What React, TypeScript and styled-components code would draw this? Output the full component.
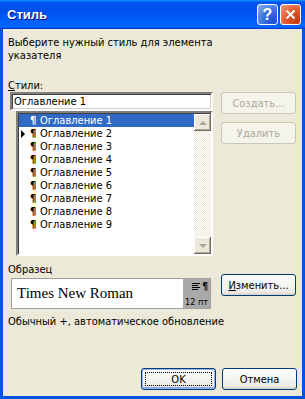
import styled, { createGlobalStyle } from 'styled-components';

const GlobalStyle = createGlobalStyle`
  html, body {
    margin: 0;
    padding: 0;
    background: #fff;
  }
  body {
    width: 305px;
    height: 399px;
    overflow: hidden;
  }
`;

const UI_FONT = `'DejaVu Sans Condensed', 'DejaVu Sans', 'Liberation Sans', sans-serif`;

const Window = styled.div`
  width: 305px;
  height: 399px;
  display: flex;
  flex-direction: column;
  background: #0054e3;
  font-family: ${UI_FONT};
  font-size: 11px;
  color: #000;
`;

const TitleBar = styled.div`
  height: 29px;
  flex: none;
  display: flex;
  align-items: center;
  padding: 0 4px 0 7px;
  background: linear-gradient(
    180deg,
    #0997ff,
    #0053ee 8%,
    #0050ee 40%,
    #06f 88%,
    #06f 93%,
    #005bff 95%,
    #003dd7 96%,
    #003dd7
  );
`;

const Title = styled.span`
  flex: 1;
  font-family: 'Liberation Sans', Arial, sans-serif;
  font-weight: bold;
  font-size: 13px;
  color: #fff;
  text-shadow: 1px 1px #0f1089;
`;

const Caption = styled.div<{ $kind: 'help' | 'close' }>`
  width: 21px;
  height: 21px;
  box-sizing: border-box;
  margin-left: 2px;
  border: 1px solid #fff;
  border-radius: 3px;
  display: flex;
  align-items: center;
  justify-content: center;
  color: #fff;
  font-family: 'Liberation Sans', Arial, sans-serif;
  font-weight: bold;
  font-size: 16px;
  background: ${(p) =>
    p.$kind === 'close'
      ? 'radial-gradient(circle at 85% 85%, #c43a12 0%, #e05a2e 50%, #eea184 100%)'
      : 'radial-gradient(circle at 85% 85%, #1a4fd6 0%, #3a72e6 50%, #8cb0f4 100%)'};
`;

const Frame = styled.div`
  flex: 1;
  display: flex;
  padding: 0 3px 3px;
`;

const Body = styled.div`
  flex: 1;
  display: flex;
  flex-direction: column;
  background: #ece9d8;
  padding: 7px 5px 6px 5px;
`;

const Text = styled.div<{ $gap?: number }>`
  line-height: 13px;
  margin-top: ${(p) => p.$gap ?? 0}px;
  white-space: nowrap;
`;

const Columns = styled.div<{ $gap?: number }>`
  display: grid;
  grid-template-columns: 205px 75px;
  column-gap: 8px;
  align-items: start;
  margin-top: ${(p) => p.$gap ?? 0}px;
`;

const LeftCol = styled.div`
  margin-left: 2px;
  display: flex;
  flex-direction: column;
`;

const Sunken = `
  border-style: solid;
  border-width: 2px;
  border-color: #808080 #fff #fff #808080;
  box-shadow: inset 1px 1px #404040, inset -1px -1px #d4d0c8;
`;

const TextBox = styled.div`
  height: 19px;
  box-sizing: border-box;
  background: #fff;
  ${Sunken}
  padding: 0 2px;
  line-height: 15px;
`;

const ListBox = styled.div`
  margin-left: 6px;
  height: 145px;
  box-sizing: border-box;
  display: flex;
  background: #fff;
  ${Sunken}
  box-shadow: inset 1px 1px #404040;
  padding: 1px 0 0 1px;
`;

const Rows = styled.ul`
  flex: 1;
  list-style: none;
  margin: 0;
  padding: 0;
`;

const Row = styled.li<{ $selected?: boolean }>`
  height: 13px;
  display: flex;
  align-items: center;
  background: ${(p) => (p.$selected ? '#316ac5' : 'transparent')};
  color: ${(p) => (p.$selected ? '#fff' : '#000')};
  line-height: 13px;
`;

const Marker = styled.span<{ $on?: boolean }>`
  width: 11px;
  flex: none;
  display: flex;
  justify-content: flex-start;
  padding-left: 2px;
  box-sizing: border-box;
  &::before {
    content: '';
    display: ${(p) => (p.$on ? 'block' : 'none')};
    border-left: 4px solid #000;
    border-top: 4px solid transparent;
    border-bottom: 4px solid transparent;
  }
`;

const Pilcrow = styled.span`
  width: 10px;
  flex: none;
  font-weight: bold;
`;

const ScrollBar = styled.div`
  width: 17px;
  flex: none;
  display: flex;
  flex-direction: column;
  justify-content: space-between;
  background: repeating-conic-gradient(#fff 0 25%, #ece9d8 0 50%) 0 0 / 2px 2px;
`;

const ScrollButton = styled.div<{ $dir: 'up' | 'down' }>`
  width: 17px;
  height: 17px;
  box-sizing: border-box;
  background: #ece9d8;
  box-shadow: inset -1px -1px #716f64, inset 1px 1px #fff, inset -2px -2px #aca899;
  display: flex;
  align-items: center;
  justify-content: center;
  &::before {
    content: '';
    border-left: 4px solid transparent;
    border-right: 4px solid transparent;
    ${(p) => (p.$dir === 'up' ? 'border-bottom' : 'border-top')}: 4px solid #aca899;
  }
`;

const ButtonStack = styled.div`
  display: flex;
  flex-direction: column;
  gap: 8px;
`;

const Button = styled.button<{ $default?: boolean }>`
  width: 75px;
  height: 22px;
  box-sizing: border-box;
  padding: 0;
  font-family: ${UI_FONT};
  font-size: 11px;
  color: #000;
  border: 1px solid #003c74;
  border-radius: 3px;
  background: linear-gradient(180deg, #fff, #ecebe6 86%, #d6d0c5);
  box-shadow: ${(p) =>
    p.$default ? 'inset 0 0 0 1px #99b5f2, inset 0 -1px 0 1px #8aa4e8' : 'none'};
  position: relative;
  &:disabled {
    color: #aca899;
    border-color: #c9c7ba;
    background: #f5f4ea;
  }
  & u {
    text-decoration: underline;
  }
`;

const FocusRing = styled.span`
  position: absolute;
  inset: 3px;
  border: 1px dotted #000;
`;

const PreviewRow = styled.div`
  display: grid;
  grid-template-columns: 205px 75px;
  column-gap: 8px;
  align-items: start;
  margin-top: -2px;
`;

const Preview = styled.div`
  margin: 4px 2px 0 3px;
  height: 31px;
  box-sizing: border-box;
  display: flex;
  background: #fff;
  border: 1px solid #a0a0a0;
`;

const Sample = styled.div`
  flex: 1;
  padding-left: 5px;
  font-family: 'Liberation Serif', 'Times New Roman', serif;
  font-size: 15px;
  line-height: 29px;
`;

const Info = styled.div`
  width: 25px;
  flex: none;
  background: #a9a9a9;
  display: flex;
  flex-direction: column;
  align-items: flex-end;
  justify-content: space-between;
  padding: 3px 2px 1px 0;
`;

const InfoIcons = styled.div`
  display: flex;
  align-items: center;
  gap: 2px;
  font-weight: bold;
  font-size: 10px;
  line-height: 9px;
`;

const InfoSize = styled.span`
  font-size: 9px;
  line-height: 10px;
  white-space: nowrap;
`;

const Footer = styled.div`
  margin-top: auto;
  display: flex;
  justify-content: flex-end;
  gap: 6px;
`;

const items = Array.from({ length: 9 }, (_, i) => `Оглавление ${i + 1}`);

function AlignIcon() {
  return (
    <svg width="8" height="7" viewBox="0 0 8 7">
      <rect x="0" y="0" width="8" height="1" fill="#000" />
      <rect x="0" y="2" width="6" height="1" fill="#000" />
      <rect x="0" y="4" width="8" height="1" fill="#000" />
      <rect x="0" y="6" width="6" height="1" fill="#000" />
    </svg>
  );
}

export default function App() {
  return (
    <>
      <GlobalStyle />
      <Window>
        <TitleBar>
          <Title>Стиль</Title>
          <Caption $kind="help">?</Caption>
          <Caption $kind="close">
            <svg width="11" height="11" viewBox="0 0 11 11">
              <path d="M1.5 1.5 L9.5 9.5 M9.5 1.5 L1.5 9.5" stroke="#fff" strokeWidth="2" />
            </svg>
          </Caption>
        </TitleBar>
        <Frame>
          <Body>
            <Text>Выберите нужный стиль для элемента</Text>
            <Text>указателя</Text>
            <Text $gap={17}>
              <u>С</u>тили:
            </Text>
            <Columns>
              <LeftCol>
                <TextBox>Оглавление 1</TextBox>
                <ListBox>
                  <Rows>
                    {items.map((name, i) => (
                      <Row key={name} $selected={i === 0}>
                        <Marker $on={i === 1} />
                        <Pilcrow>¶</Pilcrow>
                        <span>{name}</span>
                      </Row>
                    ))}
                  </Rows>
                  <ScrollBar>
                    <ScrollButton $dir="up" />
                    <ScrollButton $dir="down" />
                  </ScrollBar>
                </ListBox>
              </LeftCol>
              <ButtonStack>
                <Button disabled>Создать...</Button>
                <Button disabled>Удалить</Button>
              </ButtonStack>
            </Columns>
            <Text $gap={7}>Образец</Text>
            <PreviewRow>
              <Preview>
                <Sample>Times New Roman</Sample>
                <Info>
                  <InfoIcons>
                    <AlignIcon />
                    <span>¶</span>
                  </InfoIcons>
                  <InfoSize>12 пт</InfoSize>
                </Info>
              </Preview>
              <Button>
                <u>И</u>зменить...
              </Button>
            </PreviewRow>
            <Text $gap={6}>Обычный +, автоматическое обновление</Text>
            <Footer>
              <Button $default>
                OK
                <FocusRing />
              </Button>
              <Button>Отмена</Button>
            </Footer>
          </Body>
        </Frame>
      </Window>
    </>
  );
}
